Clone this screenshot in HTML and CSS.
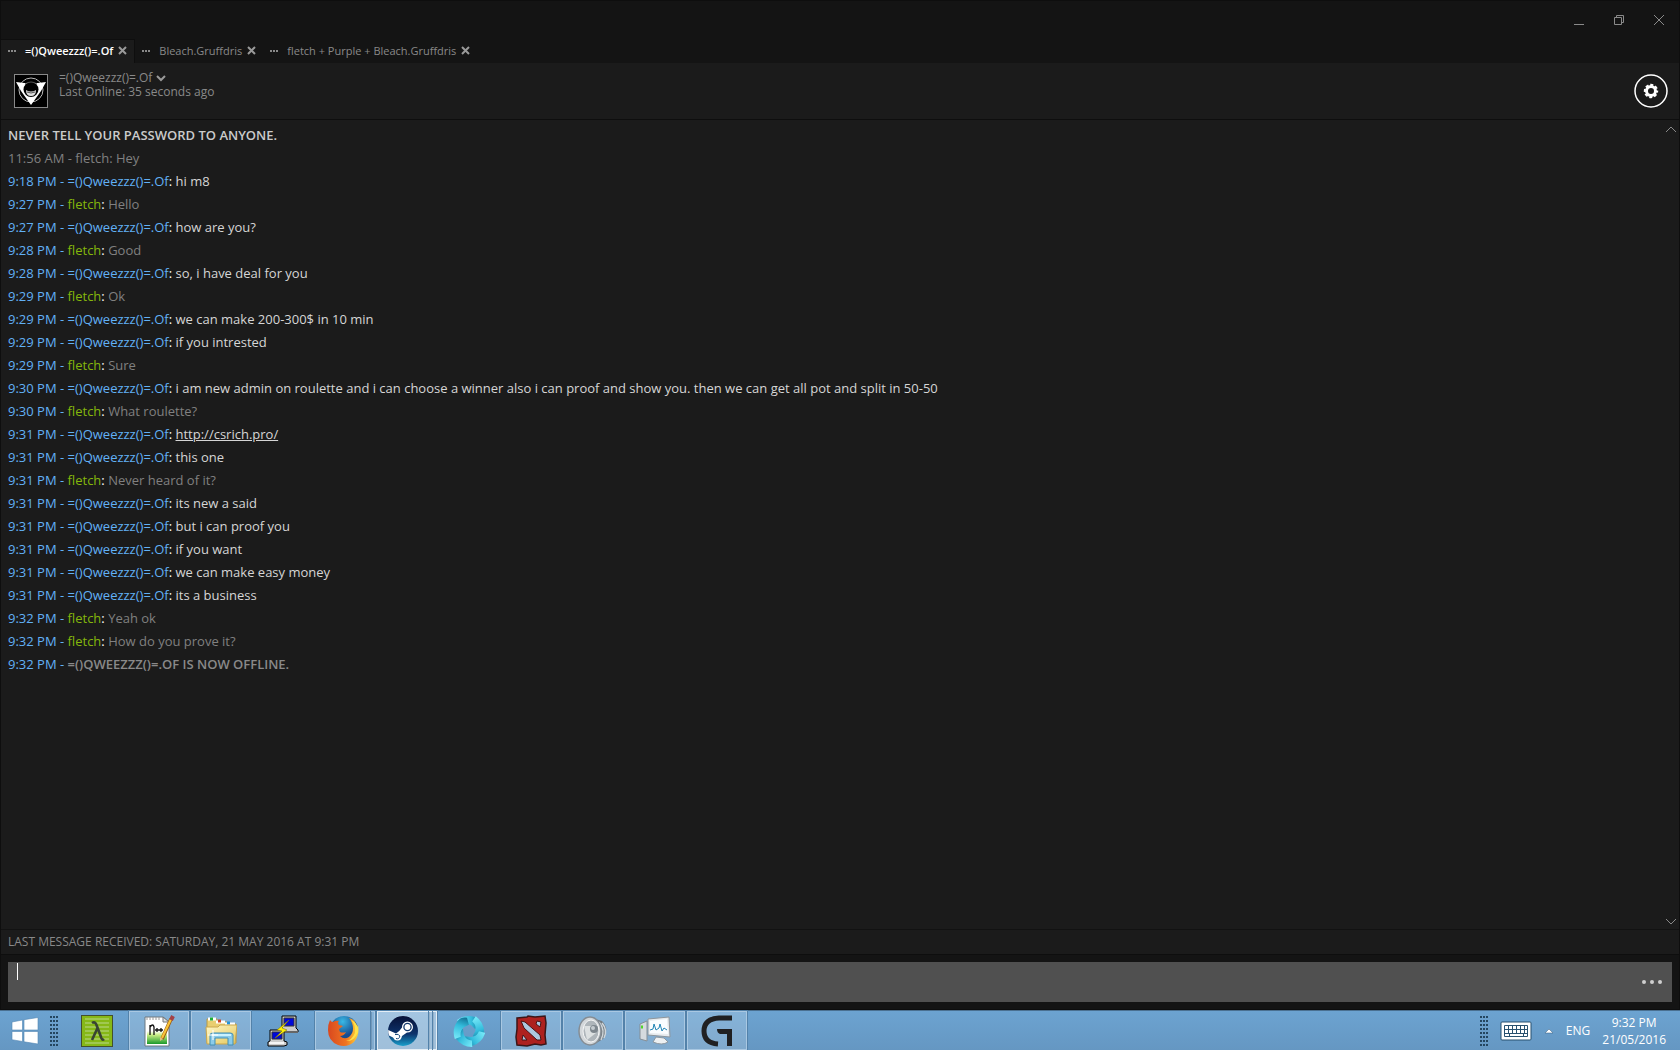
FILE: index.html
```html
<!DOCTYPE html>
<html lang="en">
<head>
<meta charset="UTF-8">
<meta name="viewport" content="width=device-width, initial-scale=1.0">
<title>=()Qweezzz()=.Of - Chat</title>
<link rel="stylesheet" href="styles.css">
</head>
<body>

<div class="window">
    <div class="titlebar">
        <div class="window-buttons">
            <button aria-label="Minimize"><svg width="12" height="12"><path d="M1 10.500H11" /></svg></button>
            <button aria-label="Restore"><svg width="12" height="12"><path d="M1.500 3.500h7v7h-7zM3.500 3V1.500h7v7H9" /></svg></button>
            <button aria-label="Close"><svg width="12" height="12"><path d="M1 1L11 11M11 1L1 11" /></svg></button>
        </div>
    </div>

    <nav class="tabs">
        <div class="tab active">
            <svg class="dots" width="9" height="2"><path d="M0 0h2v2H0zM3 0h2v2H3zM6 0h2v2H6z" /></svg>
            <a href="#chat">=()Qweezzz()=.Of</a>
            <button class="tab-close" aria-label="Close tab"><svg width="9" height="9"><path d="M1 1L8 8M8 1L1 8" /></svg></button>
        </div>
        <div class="tab">
            <svg class="dots" width="9" height="2"><path d="M0 0h2v2H0zM3 0h2v2H3zM6 0h2v2H6z" /></svg>
            <a href="#chat">Bleach.Gruffdris</a>
            <button class="tab-close" aria-label="Close tab"><svg width="9" height="9"><path d="M1 1L8 8M8 1L1 8" /></svg></button>
        </div>
        <div class="tab">
            <svg class="dots" width="9" height="2"><path d="M0 0h2v2H0zM3 0h2v2H3zM6 0h2v2H6z" /></svg>
            <a href="#chat">fletch + Purple + Bleach.Gruffdris</a>
            <button class="tab-close" aria-label="Close tab"><svg width="9" height="9"><path d="M1 1L8 8M8 1L1 8" /></svg></button>
        </div>
    </nav>

    <header class="friend">
        <svg class="avatar" width="34" height="34" viewBox="0 0 34 34">
            <rect x="0.500" y="0.500" width="33" height="33" fill="#000" stroke="#898989" />
            <circle cx="17" cy="16" r="12" fill="none" stroke="#b8b8b8" stroke-width="1" />
            <path d="M2 8L10 9H24L32 8L27 17L17 31L7 17Z" fill="#fff" />
            <circle cx="17" cy="15.500" r="7.500" fill="#000" />
            <path d="M11 10Q17 6 23 10" fill="none" stroke="#555" />
            <path d="M12 16Q17 19 22 16Q22 22 17 22Q12 22 12 16Z" fill="#ddd" />
            <path d="M13 18Q17 20 21 18" fill="none" stroke="#555" />
        </svg>
        <div class="friend-info">
            <button class="friend-name">=()Qweezzz()=.Of <svg width="10" height="8"><path d="M1 2L5 6L9 2" /></svg></button>
            <div class="friend-state">Last Online: 35 seconds ago</div>
        </div>
        <button class="settings" aria-label="Settings">
            <svg width="34" height="34" viewBox="0 0 34 34">
                <circle cx="17" cy="17" r="16" fill="none" stroke="#fff" stroke-width="1.500" />
                <circle cx="17" cy="17" r="4.500" fill="none" stroke="#fff" stroke-width="3" />
                <circle cx="17" cy="17" r="6" fill="none" stroke="#fff" stroke-width="2.400" stroke-dasharray="2.900 1.812" stroke-dashoffset="1.450" />
            </svg>
        </button>
    </header>

    <main class="chat" id="chat">
        <div class="log">
            <p class="warning">NEVER TELL YOUR PASSWORD TO ANYONE.</p>
            <p class="old">11:56 AM - fletch: Hey</p>
            <p><span class="friend-tag">9:18 PM - =()Qweezzz()=.Of</span>: <span class="said">hi m8</span></p>
            <p><span class="friend-tag">9:27 PM - </span><span class="me">fletch</span>: <span class="own">Hello</span></p>
            <p><span class="friend-tag">9:27 PM - =()Qweezzz()=.Of</span>: <span class="said">how are you?</span></p>
            <p><span class="friend-tag">9:28 PM - </span><span class="me">fletch</span>: <span class="own">Good</span></p>
            <p><span class="friend-tag">9:28 PM - =()Qweezzz()=.Of</span>: <span class="said">so, i have deal for you</span></p>
            <p><span class="friend-tag">9:29 PM - </span><span class="me">fletch</span>: <span class="own">Ok</span></p>
            <p><span class="friend-tag">9:29 PM - =()Qweezzz()=.Of</span>: <span class="said">we can make 200-300$ in 10 min</span></p>
            <p><span class="friend-tag">9:29 PM - =()Qweezzz()=.Of</span>: <span class="said">if you intrested</span></p>
            <p><span class="friend-tag">9:29 PM - </span><span class="me">fletch</span>: <span class="own">Sure</span></p>
            <p><span class="friend-tag">9:30 PM - =()Qweezzz()=.Of</span>: <span class="said">i am new admin on roulette and i can choose a winner also i can proof and show you. then we can get all pot and split in 50-50</span></p>
            <p><span class="friend-tag">9:30 PM - </span><span class="me">fletch</span>: <span class="own">What roulette?</span></p>
            <p><span class="friend-tag">9:31 PM - =()Qweezzz()=.Of</span>: <a class="said" href="#chat">http://csrich.pro/</a></p>
            <p><span class="friend-tag">9:31 PM - =()Qweezzz()=.Of</span>: <span class="said">this one</span></p>
            <p><span class="friend-tag">9:31 PM - </span><span class="me">fletch</span>: <span class="own">Never heard of it?</span></p>
            <p><span class="friend-tag">9:31 PM - =()Qweezzz()=.Of</span>: <span class="said">its new a said</span></p>
            <p><span class="friend-tag">9:31 PM - =()Qweezzz()=.Of</span>: <span class="said">but i can proof you</span></p>
            <p><span class="friend-tag">9:31 PM - =()Qweezzz()=.Of</span>: <span class="said">if you want</span></p>
            <p><span class="friend-tag">9:31 PM - =()Qweezzz()=.Of</span>: <span class="said">we can make easy money</span></p>
            <p><span class="friend-tag">9:31 PM - =()Qweezzz()=.Of</span>: <span class="said">its a business</span></p>
            <p><span class="friend-tag">9:32 PM - </span><span class="me">fletch</span>: <span class="own">Yeah ok</span></p>
            <p><span class="friend-tag">9:32 PM - </span><span class="me">fletch</span>: <span class="own">How do you prove it?</span></p>
            <p><span class="friend-tag">9:32 PM - </span><span class="offline">=()QWEEZZZ()=.OF IS NOW OFFLINE.</span></p>
        </div>
        <div class="scroll">
            <button aria-label="Scroll up"><svg width="12" height="8"><path d="M1 7L6 2L11 7" /></svg></button>
            <button aria-label="Scroll down"><svg width="12" height="8"><path d="M1 1L6 6L11 1" /></svg></button>
        </div>
    </main>

    <div class="last-message">LAST MESSAGE RECEIVED: SATURDAY, 21 MAY 2016 AT 9:31 PM</div>

    <div class="compose">
        <div class="compose-box">
            <textarea aria-label="Message"></textarea>
            <span class="caret"></span>
            <button aria-label="More"><svg width="20" height="4"><circle cx="2" cy="2" r="2" /><circle cx="10" cy="2" r="2" /><circle cx="18" cy="2" r="2" /></svg></button>
        </div>
    </div>
</div>

<footer class="taskbar">
    <button class="start" aria-label="Start">
        <svg width="28" height="28" viewBox="0 0 28 28"><path d="M1 5L11.500 3V13H1zM13 2.700L27 0.500V13H13zM1 14.500H11.500V24.500L1 22.700zM13 14.500H27V27L13 24.800z" fill="#fff" stroke="#5286b3" stroke-width="0.600" /></svg>
    </button>
    <div class="grip"></div>
    <div class="apps">
        <button class="app" aria-label="Half-Life">
            <svg width="32" height="32" viewBox="0 0 32 32">
                <rect x="0.500" y="0.500" width="31" height="31" fill="#86b817" stroke="#44502c" />
                <path d="M4 4H28M4 8H28M4 12H28M4 16H28M4 20H28M4 24H28M4 28H28" stroke="#a0c851" stroke-width="2" />
                <path d="M11 8Q14 6 15.500 10L20 22Q21 26 23 24M16.500 13L11 25" fill="none" stroke="#394432" stroke-width="2.600" />
            </svg>
        </button>
        <button class="app open" aria-label="Notepad++">
            <svg width="32" height="32" viewBox="0 0 32 32">
                <defs><linearGradient id="npp" x1="0" y1="0" x2="0" y2="1"><stop offset="0.350" stop-color="#fff" /><stop offset="0.550" stop-color="#c8ed83" /><stop offset="1" stop-color="#19982b" /></linearGradient></defs>
                <path d="M2 2H20L26 7V31H2Z" fill="#fff" stroke="#6c7880" />
                <path d="M4 9H24V29H4Z" fill="url(#npp)" />
                <path d="M4 2v3M7 2v3M10 2v3M13 2v3M16 2v3" stroke="#999" />
                <path d="M20 2V7H26Z" fill="#dde1e6" stroke="#777" />
                <path d="M7 20V10M7 12Q10 8 11 12V20M12 15H16M14 13V17M16 15H20M18 13V17" fill="none" stroke="#111" stroke-width="1.300" />
                <path d="M28 4L19 24" stroke="#9a5c12" stroke-width="3.600" />
                <path d="M28 4L19 23" stroke="#f8c33a" stroke-width="2.200" />
                <path d="M30 1L28 5" stroke="#a34147" stroke-width="4" />
                <path d="M17 26L17 22L20 24Z" fill="#e6bd82" />
            </svg>
        </button>
        <button class="app open" aria-label="File Explorer">
            <svg width="32" height="32" viewBox="0 0 32 32">
                <defs><linearGradient id="folder" x1="0" y1="0" x2="1" y2="1"><stop offset="0" stop-color="#fff8ca" /><stop offset="1" stop-color="#e5c75b" /></linearGradient></defs>
                <path d="M2 28V4H12V7H22V9H31V28Z" fill="#e9ce70" stroke="#b79a47" />
                <path d="M3 4H11M11 7H20M20 9H30" stroke="#fff" stroke-width="3" />
                <path d="M5 4H8" stroke="#1cad36" stroke-width="3" /><path d="M13 6H16" stroke="#d04422" stroke-width="3" /><path d="M22 8H25" stroke="#2593d8" stroke-width="3" />
                <path d="M1 12H13L15 10H32L30 29H2Z" fill="url(#folder)" stroke="#caa74d" />
                <path d="M5 30V20Q5 18 8 18H25Q28 18 28 20V30H23V23H10V30Z" fill="#8bcbe9" stroke="#418fb5" />
                <path d="M7 20H26" stroke="#c9f1ff" stroke-width="2" />
                <path d="M8 15V25M3 20H13" stroke="#fff" />
            </svg>
        </button>
        <button class="app" aria-label="PuTTY">
            <svg width="32" height="32" viewBox="0 0 32 32">
                <path d="M15 1H29V13L31 15V17H14V13H15Z" fill="#ccc" stroke="#000" /><path d="M17 3H27V11H17Z" fill="#0008d8" stroke="#333" />
                <path d="M17 17H31" stroke="#666" stroke-width="2" />
                <path d="M3 15H17V26L20 27V30L17 31H1V27L3 26Z" fill="#ccc" stroke="#000" /><path d="M5 17H15V24H5Z" fill="#0008d8" stroke="#333" />
                <path d="M2 28H17" stroke="#f5f5f5" stroke-width="2" />
                <path d="M22 5L10 15L15 16L8 23L20 15L15 13Z" fill="#ffee08" stroke="#817800" stroke-width="0.600" />
            </svg>
        </button>
        <div class="app-stack">
            <button class="app open" aria-label="Firefox">
                <svg width="32" height="32" viewBox="0 0 32 32">
                    <defs><radialGradient id="globe" cx="0.450" cy="0.200"><stop offset="0" stop-color="#39b9e5" /><stop offset="1" stop-color="#174c91" /></radialGradient><linearGradient id="fox"><stop offset="0" stop-color="#d9481f" /><stop offset="0.600" stop-color="#f07522" /><stop offset="1" stop-color="#ffda3a" /></linearGradient></defs>
                    <circle cx="17" cy="15" r="14" fill="url(#globe)" />
                    <path d="M3 5Q4 7 6 7Q9 5 12 6Q10 8 12 10L16 11L12 14L13 17Q16 18 19 17Q17 21 13 21Q17 25 22 22Q28 17 25 8Q24 5 22 3Q29 5 30 12L31 10Q33 20 27 27Q20 33 11 30Q1 26 1 15Q1 9 3 5Z" fill="url(#fox)" />
                    <path d="M24 5Q29 10 28 18Q25 25 19 26Q27 27 31 17Q32 9 24 5Z" fill="#ffe34a" />
                </svg>
            </button>
            <span class="sheet"></span>
        </div>
        <div class="app-stack">
            <button class="app open current" aria-label="Steam">
                <svg width="32" height="32" viewBox="0 0 32 32">
                    <defs><linearGradient id="steam" x1="0" y1="0" x2="0" y2="1"><stop offset="0" stop-color="#071137" /><stop offset="0.600" stop-color="#0c326b" /><stop offset="1" stop-color="#18a0cc" /></linearGradient></defs>
                    <circle cx="16" cy="16" r="15" fill="url(#steam)" />
                    <path d="M1.200 15L9 18.500Q12 17 15 12.500A5.500 5.500 0 1 1 20 17.500L15 21Q14 26 10 25.500Q7 25 6 22.500L2 20.500Q1 18 1.200 15Z" fill="#fff" />
                    <circle cx="20.500" cy="12" r="3.600" fill="#fff" stroke="#12386b" stroke-width="1.300" />
                    <path d="M8 19.500Q12 18.500 12.800 21Q12.500 24.500 9 23.500" fill="none" stroke="#174778" />
                </svg>
            </button>
            <span class="sheet"></span>
            <span class="sheet"></span>
        </div>
        <button class="app" aria-label="Pinwheel">
            <svg width="32" height="32" viewBox="0 0 32 32">
                <defs><linearGradient id="blade"><stop offset="0" stop-color="#7cecfa" /><stop offset="0.600" stop-color="#33bcdc" /><stop offset="1" stop-color="#126e92" /></linearGradient></defs>
                <g fill="url(#blade)">
                    <path id="fin" d="M4 5Q12 -1 22 2Q27 4 28 10L22 14L18 10Q13 7 8 10Z" />
                    <use href="#fin" transform="rotate(72 16 16)" /><use href="#fin" transform="rotate(144 16 16)" /><use href="#fin" transform="rotate(216 16 16)" /><use href="#fin" transform="rotate(288 16 16)" />
                </g>
            </svg>
        </button>
        <button class="app open" aria-label="Dota 2">
            <svg width="32" height="32" viewBox="0 0 32 32">
                <path d="M2 3L12 2L13 1L20 2L30 1L31 8L30 20L31 29L26 30L20 29L12 31L2 30L1 22L2 14Z" fill="#ad211f" stroke="#3b1618" stroke-width="1.500" />
                <path d="M6 6L10 7L25 20L26 25L22 25L9 13Z" fill="#adc8e0" stroke="#471417" />
                <path d="M22 6L26 7L25 12L21 9ZM8 20L12 25L7 25Z" fill="#adc8e0" stroke="#471417" />
            </svg>
        </button>
        <button class="app open" aria-label="Volume Mixer">
            <svg width="32" height="32" viewBox="0 0 32 32">
                <path d="M15 3L25 6Q33 14 26 24L16 30Z" fill="#737b81" />
                <path d="M22 7Q29 15 24 25M25 8Q31 15 27 23" fill="none" stroke="#ced5da" stroke-width="1.500" />
                <ellipse cx="13" cy="16" rx="11" ry="14" fill="#d3d7da" stroke="#858d94" stroke-width="1.500" />
                <ellipse cx="14" cy="16" rx="8" ry="11" fill="#aeb5ba" stroke="#f5f6f6" />
                <path d="M7 11L18 11L19 18L10 25Z" fill="#dce0e1" />
                <circle cx="17" cy="14" r="4" fill="#7d868d" /><circle cx="16" cy="13" r="2" fill="#c4cbcf" />
            </svg>
        </button>
        <button class="app open" aria-label="Resource Monitor">
            <svg width="32" height="32" viewBox="0 0 32 32">
                <path d="M1 9L8 6V26L1 24Z" fill="#d6dade" stroke="#858e96" /><path d="M2 12H4" stroke="#50d62b" stroke-width="3" />
                <path d="M9 4L30 2L31 22L9 20Z" fill="#e7ebee" stroke="#8d969d" />
                <path d="M11 6L28 4L29 19L11 18Z" fill="#fafdff" />
                <path d="M11 15L14 14L15 9L17 15L20 13L21 9L23 16L25 13L28 15" fill="none" stroke="#2084b5" />
                <path d="M17 22L25 23L29 27Q23 31 14 27Z" fill="#edf0f2" stroke="#8d979f" />
            </svg>
        </button>
        <button class="app open" aria-label="Logitech Gaming Software">
            <svg width="32" height="32" viewBox="0 0 32 32">
                <path d="M31 3H18Q3 4 3 16T17 29" fill="none" stroke="#202022" stroke-width="5" />
                <path d="M16 14H31V31H26V19H19Q16 18 16 14Z" fill="#202022" />
            </svg>
        </button>
    </div>
    <div class="tray">
        <div class="grip"></div>
        <button class="keyboard" aria-label="Touch keyboard">
            <svg width="32" height="20" viewBox="0 0 32 20">
                <rect x="1" y="1" width="30" height="18" rx="1" fill="#fff" stroke="#29516f" />
                <path d="M4.500 4.500H27.500V15.500H4.500ZM4.500 8.500H27.500M4.500 12.500H27.500M8.500 4.500V12.500M12.500 4.500V12.500M16.500 4.500V12.500M20.500 4.500V12.500M24.500 4.500V12.500M9.500 12.500V15.500M23.500 12.500V15.500" fill="none" stroke="#29516f" />
            </svg>
        </button>
        <button aria-label="Show hidden icons"><svg width="10" height="6"><path d="M1 5L5 1L9 5Z" fill="#fff" stroke="#365f80" stroke-width="0.500" /></svg></button>
        <button>ENG</button>
        <div class="clock">9:32 PM<br>21/05/2016</div>
    </div>
</footer>

</body>
</html>
```
FILE: styles.css
```css
* {
    box-sizing: border-box;
}

body {
    margin: 0;
    height: 100vh;
    display: flex;
    flex-direction: column;
    background: #141414;
    color: #898989;
    font-family: 'Open Sans', 'Noto Sans', sans-serif;
    font-size: 13px;
    overflow: hidden;
}

button {
    display: flex;
    align-items: center;
    justify-content: center;
    padding: 0;
    border: none;
    background: none;
    color: inherit;
    font: inherit;
    cursor: pointer;
}

svg {
    display: block;
    flex: none;
}

.window {
    flex: 1;
    min-height: 0;
    display: flex;
    flex-direction: column;
    border: 1px solid #0e0e0e;
}

.titlebar {
    height: 38px;
    display: flex;
    justify-content: flex-end;
    padding: 12px 14px 0 0;
}

.window-buttons {
    display: flex;
    align-items: flex-start;
    gap: 28px;
}

.window-buttons svg {
    margin-top: 1px;
    fill: none;
    stroke: #8a8a8a;
}

.tabs {
    display: flex;
    height: 24px;
    font-size: 11px;
    font-weight: 500;
}

.tab {
    display: flex;
    align-items: center;
    padding: 0 7px 2px;
    border-top: 1px solid transparent;
}

.tab.active {
    background: #1b1b1b;
    border-top: 1px solid #0e0e0e;
    border-right: 1px solid #0e0e0e;
    color: #fff;
    font-weight: 600;
}

.tab a {
    color: inherit;
    text-decoration: none;
    margin: 0 5px 0 8px;
}

.dots {
    fill: #898989;
}

.tab-close svg {
    stroke: #9a9a9a;
    stroke-width: 2;
}

.friend {
    display: flex;
    height: 57px;
    padding: 11px 11px 0 13px;
    background: #1b1b1b;
    border-bottom: 1px solid #0e0e0e;
}

.friend-info {
    flex: 1;
    margin-left: 11px;
    font-size: 12px;
    line-height: 14px;
    margin-top: -3px;
}

.friend-name {
    gap: 4px;
}

.friend-name svg {
    fill: none;
    stroke: #9a9a9a;
    stroke-width: 2;
}

.settings {
    height: 34px;
}

.chat {
    flex: 1;
    min-height: 0;
    display: flex;
    background: #1b1b1b;
}

.log {
    flex: 1;
    padding: 4px 7px;
    color: #fff;
}

.log p {
    margin: 0;
    line-height: 23px;
}

.log .warning {
    color: #cbcbcb;
    font-weight: 600;
}

.log .old, .own {
    color: #808080;
}

.friend-tag {
    color: #62b1f6;
}

.me {
    color: #84b70b;
}

.said {
    color: #d6d6d6;
}

.offline {
    color: #898989;
    font-weight: 600;
}

.scroll {
    display: flex;
    flex-direction: column;
    justify-content: space-between;
    padding: 5px 2px 3px 0;
}

.scroll svg {
    fill: none;
    stroke: #898989;
}

.last-message {
    height: 26px;
    padding: 0 7px;
    background: #1b1b1b;
    border-top: 1px solid #121212;
    border-bottom: 1px solid #0e0e0e;
    font-size: 12px;
    line-height: 24px;
}

.compose {
    padding: 7px;
}

.compose-box {
    position: relative;
    display: flex;
    height: 40px;
    padding-right: 10px;
    background: #505050;
}

.compose-box textarea {
    flex: 1;
    padding: 2px 10px;
    border: none;
    outline: none;
    resize: none;
    background: none;
    color: #fff;
    font: inherit;
}

.compose-box button {
    fill: #cfcfcf;
}

.caret {
    position: absolute;
    left: 9px;
    top: 1px;
    width: 1px;
    height: 17px;
    background: #fff;
}

.taskbar {
    height: 40px;
    display: flex;
    align-items: center;
    background: linear-gradient(#6ca3d1, #6597c2);
    border-top: 1px solid #4a7091;
    color: #fff;
    font-size: 12px;
}

.start {
    width: 50px;
}

.grip {
    width: 8px;
    height: 30px;
    background: radial-gradient(circle at 1px 1px, #244660 1px, transparent 1px) 0 0 / 3px 4px;
}

.apps {
    flex: 1;
    display: flex;
    gap: 2px;
    padding-left: 9px;
}

.app {
    width: 60px;
    height: 39px;
}

.app.open, .sheet {
    background: rgba(255, 255, 255, 0.18);
    border: 1px solid #a9c8e2;
    outline: 1px solid #5382aa;
}

.app.current, .current ~ .sheet {
    background: rgba(255, 255, 255, 0.38);
    border-color: #e4eef6;
}

.app-stack {
    display: flex;
    width: 60px;
}

.app-stack .app {
    flex: 1;
}

.sheet {
    width: 4px;
    border-left: none;
}

.tray {
    display: flex;
    align-items: center;
    gap: 12px;
    padding-right: 14px;
}

.clock {
    text-align: center;
    line-height: 17px;
}
```
